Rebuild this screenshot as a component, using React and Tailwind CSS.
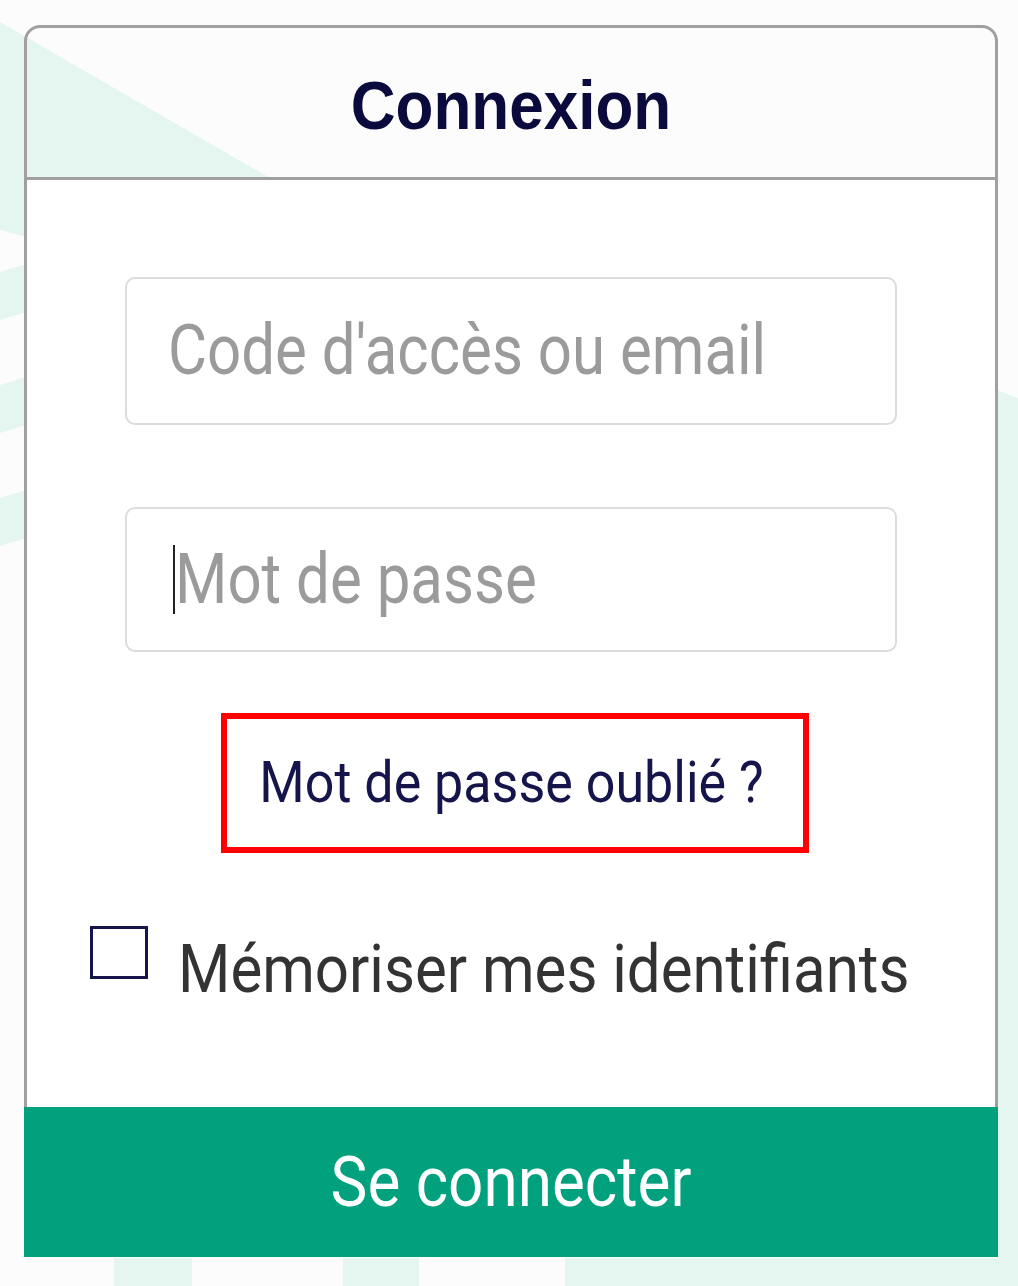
import React from "react";

const Backdrop = () => (
    <svg
        className="absolute inset-0"
        width="1018"
        height="1286"
        viewBox="0 0 1018 1286"
        fill="#e5f6f1"
    >
        <polygon points="0,22 270,178 270,300 0,230" />
        <polygon points="0,272 26,264 26,312 0,320" />
        <polygon points="0,385 26,377 26,425 0,433" />
        <polygon points="0,498 26,490 26,538 0,546" />
        <polygon points="997,390 1018,398 1018,1286 997,1286" />
        <rect x="114" y="1258" width="78" height="28" />
        <rect x="343" y="1258" width="76" height="28" />
        <rect x="565" y="1258" width="453" height="28" />
    </svg>
);

const App = () => {
    return (
        <div className="relative w-[1018px] h-[1286px] overflow-hidden bg-[#fcfcfc] font-['Roboto',sans-serif]">
            <Backdrop />
            <div className="relative ml-[24px] pt-[25px] w-[974px] flex flex-col">
                <div className="h-[155px] flex items-center justify-center pt-[6px] border-[3px] border-[#a0a0a0] rounded-t-[16px]">
                    <h1 className="font-['Liberation_Sans',Arial,sans-serif] text-[62px] leading-none font-bold text-[#0a0a3c] scale-y-[1.1]">
                        Connexion
                    </h1>
                </div>

                <div className="h-[927px] bg-white border-x-[3px] border-[#a0a0a0] flex flex-col">
                    <div className="mt-[97px] mx-[98px] flex flex-col gap-[82px]">
                        <label className="h-[148px] flex items-center pl-[41px] border-2 border-[#dcdcdc] rounded-[10px] bg-white">
                            <input
                                type="text"
                                placeholder="Code d'accès ou email"
                                className="w-full bg-transparent outline-none text-[60px] text-[#333] placeholder:text-[#9b9b9b] scale-y-[1.17] origin-left"
                            />
                        </label>
                        <label className="h-[145px] flex items-center pl-[46px] border-2 border-[#dcdcdc] rounded-[10px] bg-white">
                            <span className="w-[2px] h-[69px] bg-[#222] shrink-0"></span>
                            <input
                                type="password"
                                placeholder="Mot de passe"
                                className="w-full bg-transparent outline-none text-[60px] text-[#333] placeholder:text-[#9b9b9b] scale-y-[1.17] origin-left"
                            />
                        </label>
                    </div>

                    <div className="mt-[61px] flex justify-center pl-[7px]">
                        <a className="w-[588px] h-[140px] flex items-center justify-center pr-[6px] border-[6px] border-[#ff0000] cursor-pointer">
                            <span className="text-[52px] leading-none text-[#15154b] scale-y-[1.1]">
                                Mot de passe oublié ?
                            </span>
                        </a>
                    </div>

                    <div className="mt-[73px] ml-[63px] flex items-start gap-[30px]">
                        <span className="w-[58px] h-[53px] border-[3px] border-[#15154b] bg-white shrink-0"></span>
                        <span className="mt-[10px] text-[60px] leading-none text-[#333] scale-y-[1.12] origin-top">
                            Mémoriser mes identifiants
                        </span>
                    </div>
                </div>

                <button className="h-[150px] w-[974px] bg-[#00a17c] flex items-center justify-center">
                    <span className="text-[62px] leading-none text-white scale-y-[1.13]">
                        Se connecter
                    </span>
                </button>
            </div>
        </div>
    );
};

export default App;
